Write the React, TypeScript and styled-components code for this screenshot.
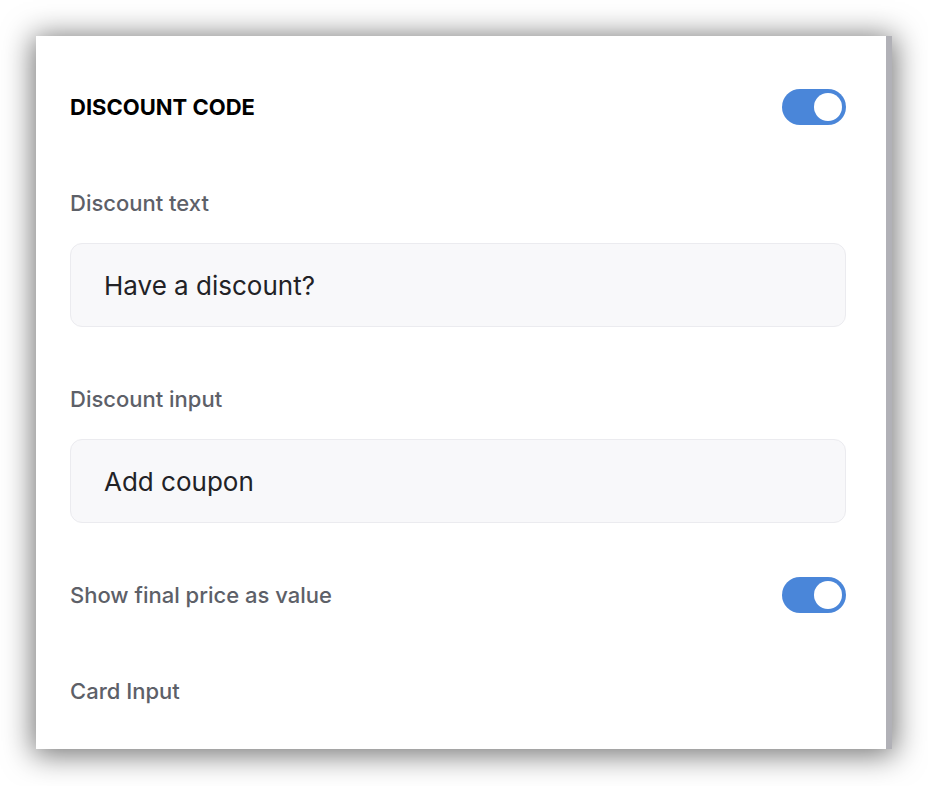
import styled, { createGlobalStyle } from "styled-components";

const GlobalStyle = createGlobalStyle`
  html, body {
    margin: 0;
    padding: 0;
    background: #ffffff;
  }
  body {
    font-family: Inter, "Noto Sans", "Liberation Sans", sans-serif;
  }
`;

const Page = styled.div`
  width: 928px;
  height: 786px;
  padding: 36px 0 0 36px;
  box-sizing: border-box;
`;

const Panel = styled.div`
  width: 856px;
  height: 713px;
  box-sizing: border-box;
  background: #ffffff;
  border-right: 6px solid #b1b1b7;
  box-shadow: 0 3px 28px 3px rgba(0, 0, 0, 0.55);
  padding: 53px 40px 0 34px;
  display: flex;
  flex-direction: column;
`;

const Row = styled.div<{ $gap?: number }>`
  display: flex;
  align-items: center;
  justify-content: space-between;
  height: 36px;
  margin-top: ${(p) => p.$gap ?? 0}px;
`;

const Title = styled.h2`
  margin: 0;
  font-size: 22px;
  font-weight: 700;
  color: #000000;
`;

const Label = styled.div<{ $gap?: number }>`
  font-size: 22px;
  line-height: 24px;
  font-weight: 500;
  color: #5d6068;
  margin-top: ${(p) => p.$gap ?? 0}px;
`;

const TextBox = styled.div`
  margin-top: 28px;
  height: 84px;
  box-sizing: border-box;
  border: 1.5px solid #ebebef;
  border-radius: 12px;
  background: #f8f8fa;
  display: flex;
  align-items: center;
  padding-left: 33px;
  font-size: 26px;
  color: #222226;
`;

const Toggle = styled.div<{ $on?: boolean }>`
  width: 64px;
  height: 36px;
  border-radius: 18px;
  background: ${(p) => (p.$on ? "#4a86d9" : "#d4d5da")};
  position: relative;
  flex-shrink: 0;
`;

const Knob = styled.div<{ $on?: boolean }>`
  position: absolute;
  top: 4px;
  left: ${(p) => (p.$on ? "32px" : "4px")};
  width: 28px;
  height: 28px;
  border-radius: 50%;
  background: #ffffff;
`;

function Switch({ on }: { on: boolean }) {
  return (
    <Toggle $on={on}>
      <Knob $on={on} />
    </Toggle>
  );
}

function App() {
  return (
    <Page>
      <GlobalStyle />
      <Panel>
        <Row>
          <Title>DISCOUNT CODE</Title>
          <Switch on />
        </Row>
        <Label $gap={66}>Discount text</Label>
        <TextBox>Have a discount?</TextBox>
        <Label $gap={60}>Discount input</Label>
        <TextBox>Add coupon</TextBox>
        <Row $gap={54}>
          <Label>Show final price as value</Label>
          <Switch on />
        </Row>
        <Label $gap={66}>Card Input</Label>
      </Panel>
    </Page>
  );
}

export default App;
